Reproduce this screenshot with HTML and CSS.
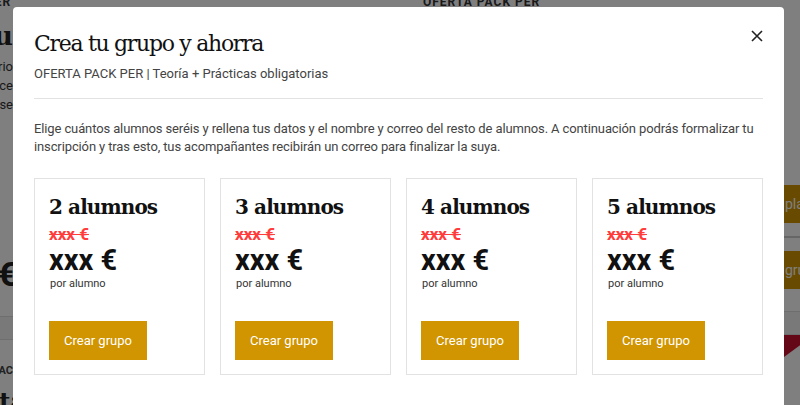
FILE: index.html
```html
<!DOCTYPE html>
<html lang="es">
<head>
  <meta charset="UTF-8" />
  <title>Crea tu grupo y ahorra</title>
  <link rel="stylesheet" href="styles.css">
</head>
<body>
  <div class="page">
    <div class="page-top">
      <span class="top-left">PER</span>
      <span class="top-right">OFERTA PACK PER</span>
    </div>
    <div class="page-cols">
      <div class="page-left">
        <div class="big-title">Paquete</div>
        <p class="small-line">Temario</p>
        <p class="small-line">Acce</p>
        <p class="small-line">Clase</p>
        <div class="big-price">€</div>
        <div class="band"></div>
        <div class="small-cap">PAC</div>
        <div class="big-a">Oferta</div>
      </div>
      <div class="page-right">
        <div class="brown-btn">plan</div>
        <div class="thin-line"></div>
        <div class="brown-btn">grupo</div>
        <div class="band"></div>
        <div class="red-tri"></div>
      </div>
    </div>
  </div>

  <div class="overlay">
    <div class="modal">
      <button class="close" aria-label="Cerrar">
        <svg width="12" height="12" viewBox="0 0 12 12"><path d="M1 1 L11 11 M11 1 L1 11" stroke="#222" stroke-width="1.6" fill="none"/></svg>
      </button>
      <h2 class="modal-title">Crea tu grupo y ahorra</h2>
      <div class="modal-sub">OFERTA PACK PER | Teoría + Prácticas obligatorias</div>
      <hr class="divider">
      <p class="intro">Elige cuántos alumnos seréis y rellena tus datos y el nombre y correo del resto de alumnos. A continuación podrás formalizar tu inscripción y tras esto, tus acompañantes recibirán un correo para finalizar la suya.</p>

      <div class="cards">
        <div class="card">
          <h3 class="card-title">2 alumnos</h3>
          <div class="old-price">xxx €</div>
          <div class="price">xxx €</div>
          <div class="per">por alumno</div>
          <button class="create">Crear grupo</button>
        </div>
        <div class="card">
          <h3 class="card-title">3 alumnos</h3>
          <div class="old-price">xxx €</div>
          <div class="price">xxx €</div>
          <div class="per">por alumno</div>
          <button class="create">Crear grupo</button>
        </div>
        <div class="card">
          <h3 class="card-title">4 alumnos</h3>
          <div class="old-price">xxx €</div>
          <div class="price">xxx €</div>
          <div class="per">por alumno</div>
          <button class="create">Crear grupo</button>
        </div>
        <div class="card">
          <h3 class="card-title">5 alumnos</h3>
          <div class="old-price">xxx €</div>
          <div class="price">xxx €</div>
          <div class="per">por alumno</div>
          <button class="create">Crear grupo</button>
        </div>
      </div>
    </div>
  </div>
</body>
</html>
```

FILE: styles.css
```css
body {
  margin: 0;
  font-family: Roboto, "Liberation Sans", sans-serif;
  background: #fff;
  color: #222;
  overflow: hidden;
  height: 405px;
}

/* page behind the dialog */
.page {
  height: 405px;
  overflow: hidden;
}
.page-top {
  height: 7px;
  display: flex;
  font-size: 12px;
  font-weight: 700;
  color: #333;
  overflow: hidden;
  letter-spacing: 1px;
}
.top-left {
  margin-left: -14px;
  width: 437px;
  line-height: 4px;
}
.top-right {
  line-height: 4px;
}
.page-cols {
  display: flex;
  justify-content: space-between;
}
.page-left {
  width: 73px;
  margin-left: -60px;
  overflow: hidden;
  text-align: right;
}
.big-title {
  font-family: "DejaVu Serif", serif;
  font-weight: 700;
  font-size: 26px;
  margin-top: 14px;
  height: 36px;
}
.small-line {
  margin: 0;
  font-size: 13px;
  line-height: 19px;
  color: #333;
}
.big-price {
  font-size: 34px;
  font-weight: 700;
  margin-top: 140px;
  margin-right: -4px;
}
.band {
  height: 22px;
  margin-top: 22px;
  background: #f2f2f2;
  border-top: 1px solid #ddd;
  border-bottom: 1px solid #ddd;
}
.small-cap {
  margin-top: 24px;
  font-size: 11px;
  font-weight: 700;
  color: #444;
}
.big-a {
  margin-top: 10px;
  font-family: "DejaVu Serif", serif;
  font-weight: 700;
  font-size: 24px;
}
.page-right {
  width: 16px;
  overflow: hidden;
  padding-top: 178px;
}
.brown-btn {
  background: #d09500;
  color: #fff;
  height: 38px;
  line-height: 38px;
  font-size: 14px;
  padding-left: 1px;
  width: 40px;
  white-space: nowrap;
}
.thin-line {
  height: 2px;
  background: #ccc;
  margin: 13px 0;
}
.page-right .band {
  margin-top: 22px;
}
.red-tri {
  width: 0;
  height: 0;
  border-top: 22px solid #c8102e;
  border-right: 30px solid transparent;
}

/* dialog */
.overlay {
  position: fixed;
  inset: 0;
  background: rgba(0, 0, 0, 0.5);
  padding: 7px 16px 0 13px;
}
.modal {
  position: relative;
  background: #fff;
  border-radius: 4px 4px 0 0;
  padding: 22px 21px 40px 21px;
  height: 420px;
  box-sizing: border-box;
}
.close {
  position: absolute;
  top: 23px;
  right: 21px;
  background: none;
  border: none;
  padding: 0;
  cursor: pointer;
}
.modal-title {
  margin: 0;
  font-family: "DejaVu Serif", serif;
  font-weight: 400;
  font-size: 22px;
  letter-spacing: -1.3px;
  line-height: 30px;
  color: #111;
}
.modal-sub {
  margin-top: 6px;
  font-size: 13px;
  line-height: 18px;
  color: #444;
}
.divider {
  border: none;
  border-top: 1px solid #e2e2e2;
  margin: 15px 0 21px;
}
.intro {
  margin: 0;
  font-size: 13px;
  letter-spacing: -0.12px;
  line-height: 18px;
  color: #444;
}
.cards {
  display: grid;
  grid-template-columns: repeat(4, 1fr);
  gap: 15px;
  margin-top: 22px;
}
.card {
  border: 1px solid #e2e2e2;
  padding: 15px 14px 14px;
}
.card-title {
  margin: 0;
  font-family: "DejaVu Serif", serif;
  font-weight: 700;
  font-size: 20px;
  letter-spacing: -0.9px;
  line-height: 26px;
  color: #111;
}
.old-price {
  margin-top: 5px;
  font-size: 17px;
  font-weight: 700;
  line-height: 18px;
  color: #ff3b3b;
  text-decoration: line-through;
}
.price {
  margin-top: 2px;
  font-size: 29px;
  font-weight: 700;
  line-height: 30px;
  color: #111;
}
.per {
  margin-top: 2px;
  font-size: 11px;
  line-height: 14px;
  color: #333;
  padding-left: 1px;
}
.create {
  margin-top: 30px;
  background: #d09500;
  color: #fff;
  border: none;
  font-family: Roboto, "Liberation Sans", sans-serif;
  font-size: 13px;
  height: 39px;
  width: 98px;
  padding: 0;
  cursor: pointer;
}
```
